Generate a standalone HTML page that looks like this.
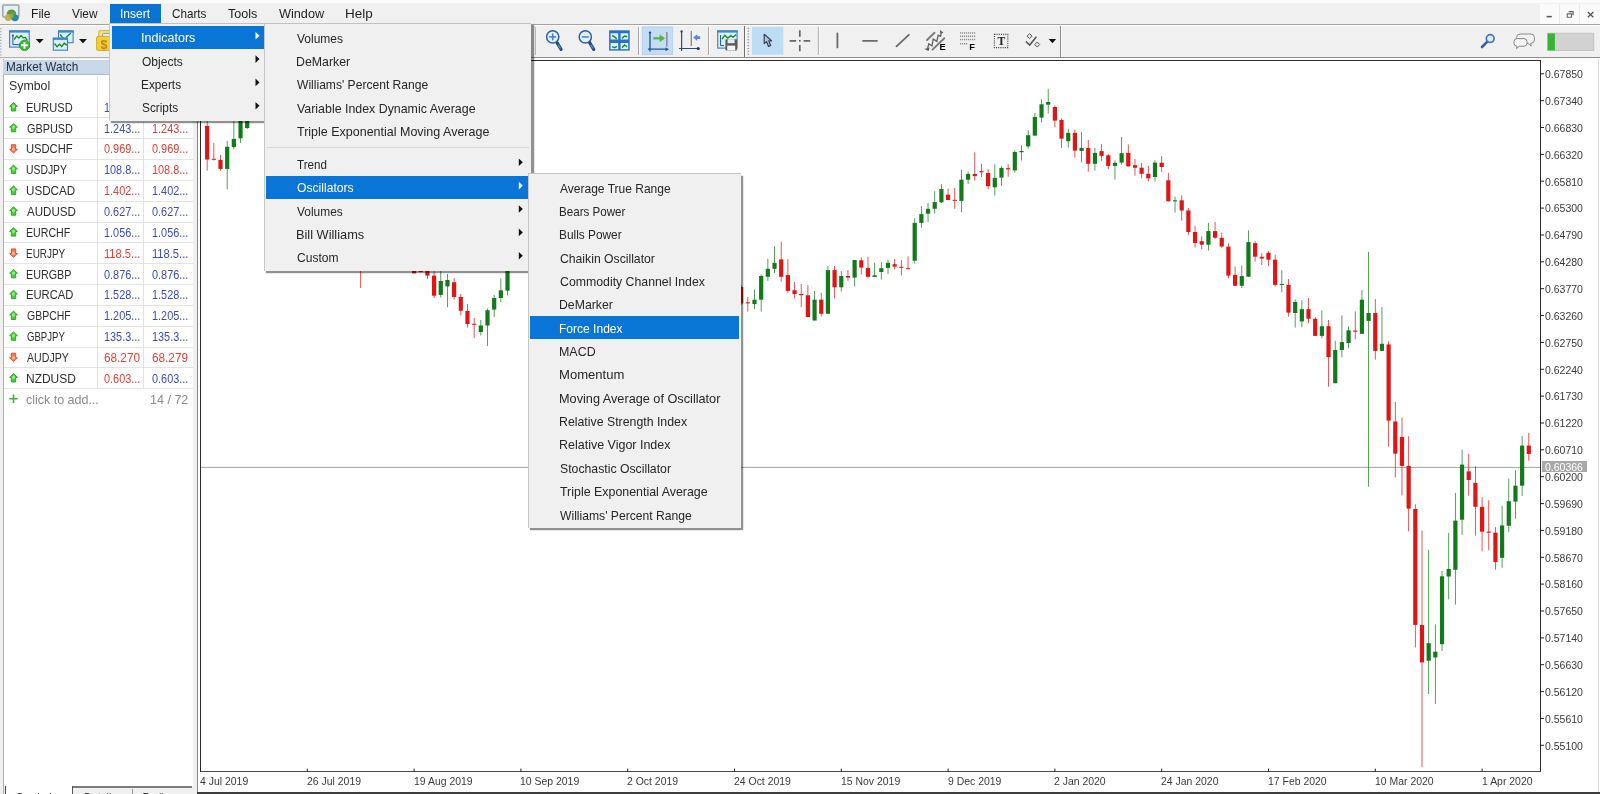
<!DOCTYPE html>
<html lang="en"><head><meta charset="utf-8"><title>MetaTrader - Insert Indicators Oscillators Force Index</title>
<style>
html,body{margin:0;padding:0;}
body{width:1600px;height:794px;overflow:hidden;background:#fff;position:relative;font-family:"Liberation Sans", sans-serif;}
.t{position:absolute;white-space:nowrap;transform-origin:0 50%;}
.b{position:absolute;}
svg{position:absolute;left:0;top:0;overflow:visible;}
svg text{font-family:"Liberation Sans", sans-serif;}
</style></head><body><div id="root" style="position:absolute;left:0;top:0;width:1600px;height:794px;overflow:hidden;will-change:transform;">
<div class="b" style="left:0.00px;top:0.00px;width:1600.00px;height:3.00px;background:#fbfbfb;"></div>
<div class="b" style="left:0.00px;top:3.00px;width:1600.00px;height:21.50px;background:#f0f0f0;"></div>
<div class="b" style="left:0.00px;top:24.00px;width:1600.00px;height:1.00px;background:#a3a3a3;"></div>
<div class="b" style="left:0.00px;top:25.00px;width:1600.00px;height:1.00px;background:#fdfdfd;"></div>
<div class="b" style="left:0.00px;top:26.00px;width:1600.00px;height:31.00px;background:#f0f0f0;"></div>
<div class="b" style="left:0.00px;top:57.00px;width:1600.00px;height:1.00px;background:#8e8e8e;"></div>
<div class="b" style="left:0.00px;top:57.00px;width:197.00px;height:1.00px;background:#b0b0b0;"></div>
<div class="b" style="left:0.00px;top:58.00px;width:1600.00px;height:2.00px;background:#fafafa;"></div>
<div class="b" style="left:0.00px;top:58.00px;width:200.00px;height:736.00px;background:#f0f0f0;"></div>
<div class="b" style="left:109.80px;top:3.60px;width:51.20px;height:19.60px;background:#0a74d4;"></div>
<span id="t1" class="t" style="left:30.55px;top:4.96px;font-size:12.80px;line-height:17px;color:#1d1d1d;transform:scaleX(0.9486);">File</span>
<span id="t2" class="t" style="left:72.10px;top:4.96px;font-size:12.80px;line-height:17px;color:#1d1d1d;transform:scaleX(0.9270);">View</span>
<span id="t3" class="t" style="left:119.76px;top:4.96px;font-size:12.80px;line-height:17px;color:#fff;transform:scaleX(0.9380);">Insert</span>
<span id="t4" class="t" style="left:172.10px;top:4.96px;font-size:12.80px;line-height:17px;color:#1d1d1d;transform:scaleX(0.9117);">Charts</span>
<span id="t5" class="t" style="left:227.90px;top:4.96px;font-size:12.80px;line-height:17px;color:#1d1d1d;transform:scaleX(0.9805);">Tools</span>
<span id="t6" class="t" style="left:278.90px;top:4.96px;font-size:12.80px;line-height:17px;color:#1d1d1d;transform:scaleX(0.9920);">Window</span>
<span id="t7" class="t" style="left:345.25px;top:4.96px;font-size:12.80px;line-height:17px;color:#1d1d1d;transform:scaleX(1.0515);">Help</span>
<div class="b" style="left:1540.00px;top:4.20px;width:60.00px;height:19.80px;background:#fafafa;"></div>
<div class="b" style="left:1558.60px;top:4.20px;width:1.00px;height:19.80px;background:#e9e9e9;"></div>
<div class="b" style="left:1579.00px;top:4.20px;width:1.00px;height:19.80px;background:#e9e9e9;"></div>
<div class="b" style="left:2.50px;top:58.60px;width:190.00px;height:736.00px;background:#fff;border-left:1px solid #b0b0b0;box-sizing:border-box;"></div>
<div class="b" style="left:3.30px;top:59.80px;width:190.20px;height:14.20px;background:#c9d8e9;"></div>
<div class="b" style="left:3.30px;top:73.60px;width:190.20px;height:1.00px;background:#aebccb;"></div>
<span id="t8" class="t" style="left:5.53px;top:58.57px;font-size:12.20px;line-height:16px;color:#1c2b3b;transform:scaleX(0.9665);">Market Watch</span>
<span id="t9" class="t" style="left:8.60px;top:78.27px;font-size:12.20px;line-height:16px;color:#2e2e2e;transform:scaleX(1.0142);">Symbol</span>
<div class="b" style="left:96.90px;top:76.00px;width:1.00px;height:311.50px;background:#e2e2e2;"></div>
<div class="b" style="left:143.20px;top:76.00px;width:1.00px;height:311.50px;background:#e2e2e2;"></div>
<span id="t10" class="t" style="left:25.75px;top:98.75px;font-size:13.00px;line-height:17px;color:#2e2e2e;transform:scaleX(0.8504);">EURUSD</span>
<span id="t11" class="t" style="left:104.40px;top:98.75px;font-size:13.00px;line-height:17px;color:#3b4cc0;transform:scaleX(0.8373);">1.088...</span>
<span id="t12" class="t" style="left:151.80px;top:98.75px;font-size:13.00px;line-height:17px;color:#3b4cc0;transform:scaleX(0.8373);">1.088...</span>
<div class="b" style="left:4.00px;top:117.30px;width:189.00px;height:1.00px;background:#e3e3e3;"></div>
<span id="t13" class="t" style="left:26.60px;top:119.59px;font-size:13.00px;line-height:17px;color:#2e2e2e;transform:scaleX(0.8347);">GBPUSD</span>
<span id="t14" class="t" style="left:104.40px;top:119.59px;font-size:13.00px;line-height:17px;color:#3b4cc0;transform:scaleX(0.8373);">1.243...</span>
<span id="t15" class="t" style="left:151.80px;top:119.59px;font-size:13.00px;line-height:17px;color:#e0403a;transform:scaleX(0.8373);">1.243...</span>
<div class="b" style="left:4.00px;top:138.15px;width:189.00px;height:1.00px;background:#e3e3e3;"></div>
<span id="t16" class="t" style="left:25.74px;top:140.44px;font-size:13.00px;line-height:17px;color:#2e2e2e;transform:scaleX(0.8605);">USDCHF</span>
<span id="t17" class="t" style="left:104.40px;top:140.44px;font-size:13.00px;line-height:17px;color:#e0403a;transform:scaleX(0.8373);">0.969...</span>
<span id="t18" class="t" style="left:151.80px;top:140.44px;font-size:13.00px;line-height:17px;color:#e0403a;transform:scaleX(0.8373);">0.969...</span>
<div class="b" style="left:4.00px;top:158.99px;width:189.00px;height:1.00px;background:#e3e3e3;"></div>
<span id="t19" class="t" style="left:25.80px;top:161.28px;font-size:13.00px;line-height:17px;color:#2e2e2e;transform:scaleX(0.7981);">USDJPY</span>
<span id="t20" class="t" style="left:104.40px;top:161.28px;font-size:13.00px;line-height:17px;color:#3b4cc0;transform:scaleX(0.8373);">108.8...</span>
<span id="t21" class="t" style="left:151.80px;top:161.28px;font-size:13.00px;line-height:17px;color:#e0403a;transform:scaleX(0.8373);">108.8...</span>
<div class="b" style="left:4.00px;top:179.84px;width:189.00px;height:1.00px;background:#e3e3e3;"></div>
<span id="t22" class="t" style="left:25.70px;top:182.13px;font-size:13.00px;line-height:17px;color:#2e2e2e;transform:scaleX(0.8952);">USDCAD</span>
<span id="t23" class="t" style="left:104.40px;top:182.13px;font-size:13.00px;line-height:17px;color:#e0403a;transform:scaleX(0.8373);">1.402...</span>
<span id="t24" class="t" style="left:151.80px;top:182.13px;font-size:13.00px;line-height:17px;color:#3b4cc0;transform:scaleX(0.8373);">1.402...</span>
<div class="b" style="left:4.00px;top:200.68px;width:189.00px;height:1.00px;background:#e3e3e3;"></div>
<span id="t25" class="t" style="left:26.60px;top:202.98px;font-size:13.00px;line-height:17px;color:#2e2e2e;transform:scaleX(0.8916);">AUDUSD</span>
<span id="t26" class="t" style="left:104.40px;top:202.98px;font-size:13.00px;line-height:17px;color:#3b4cc0;transform:scaleX(0.8373);">0.627...</span>
<span id="t27" class="t" style="left:151.80px;top:202.98px;font-size:13.00px;line-height:17px;color:#3b4cc0;transform:scaleX(0.8373);">0.627...</span>
<div class="b" style="left:4.00px;top:221.53px;width:189.00px;height:1.00px;background:#e3e3e3;"></div>
<span id="t28" class="t" style="left:25.78px;top:223.82px;font-size:13.00px;line-height:17px;color:#2e2e2e;transform:scaleX(0.8173);">EURCHF</span>
<span id="t29" class="t" style="left:104.40px;top:223.82px;font-size:13.00px;line-height:17px;color:#3b4cc0;transform:scaleX(0.8373);">1.056...</span>
<span id="t30" class="t" style="left:151.80px;top:223.82px;font-size:13.00px;line-height:17px;color:#3b4cc0;transform:scaleX(0.8373);">1.056...</span>
<div class="b" style="left:4.00px;top:242.38px;width:189.00px;height:1.00px;background:#e3e3e3;"></div>
<span id="t31" class="t" style="left:25.84px;top:244.67px;font-size:13.00px;line-height:17px;color:#2e2e2e;transform:scaleX(0.7645);">EURJPY</span>
<span id="t32" class="t" style="left:104.40px;top:244.67px;font-size:13.00px;line-height:17px;color:#e0403a;transform:scaleX(0.8567);">118.5...</span>
<span id="t33" class="t" style="left:151.80px;top:244.67px;font-size:13.00px;line-height:17px;color:#3b4cc0;transform:scaleX(0.8567);">118.5...</span>
<div class="b" style="left:4.00px;top:263.22px;width:189.00px;height:1.00px;background:#e3e3e3;"></div>
<span id="t34" class="t" style="left:25.77px;top:265.51px;font-size:13.00px;line-height:17px;color:#2e2e2e;transform:scaleX(0.8285);">EURGBP</span>
<span id="t35" class="t" style="left:104.40px;top:265.51px;font-size:13.00px;line-height:17px;color:#3b4cc0;transform:scaleX(0.8373);">0.876...</span>
<span id="t36" class="t" style="left:151.80px;top:265.51px;font-size:13.00px;line-height:17px;color:#3b4cc0;transform:scaleX(0.8373);">0.876...</span>
<div class="b" style="left:4.00px;top:284.07px;width:189.00px;height:1.00px;background:#e3e3e3;"></div>
<span id="t37" class="t" style="left:25.74px;top:286.36px;font-size:13.00px;line-height:17px;color:#2e2e2e;transform:scaleX(0.8634);">EURCAD</span>
<span id="t38" class="t" style="left:104.40px;top:286.36px;font-size:13.00px;line-height:17px;color:#3b4cc0;transform:scaleX(0.8373);">1.528...</span>
<span id="t39" class="t" style="left:151.80px;top:286.36px;font-size:13.00px;line-height:17px;color:#3b4cc0;transform:scaleX(0.8373);">1.528...</span>
<div class="b" style="left:4.00px;top:304.91px;width:189.00px;height:1.00px;background:#e3e3e3;"></div>
<span id="t40" class="t" style="left:26.60px;top:307.21px;font-size:13.00px;line-height:17px;color:#2e2e2e;transform:scaleX(0.8077);">GBPCHF</span>
<span id="t41" class="t" style="left:104.40px;top:307.21px;font-size:13.00px;line-height:17px;color:#3b4cc0;transform:scaleX(0.8373);">1.205...</span>
<span id="t42" class="t" style="left:151.80px;top:307.21px;font-size:13.00px;line-height:17px;color:#3b4cc0;transform:scaleX(0.8373);">1.205...</span>
<div class="b" style="left:4.00px;top:325.76px;width:189.00px;height:1.00px;background:#e3e3e3;"></div>
<span id="t43" class="t" style="left:26.60px;top:328.05px;font-size:13.00px;line-height:17px;color:#2e2e2e;transform:scaleX(0.7361);">GBPJPY</span>
<span id="t44" class="t" style="left:104.40px;top:328.05px;font-size:13.00px;line-height:17px;color:#3b4cc0;transform:scaleX(0.8373);">135.3...</span>
<span id="t45" class="t" style="left:151.80px;top:328.05px;font-size:13.00px;line-height:17px;color:#3b4cc0;transform:scaleX(0.8373);">135.3...</span>
<div class="b" style="left:4.00px;top:346.61px;width:189.00px;height:1.00px;background:#e3e3e3;"></div>
<span id="t46" class="t" style="left:26.60px;top:348.90px;font-size:13.00px;line-height:17px;color:#2e2e2e;transform:scaleX(0.8156);">AUDJPY</span>
<span id="t47" class="t" style="left:104.40px;top:348.90px;font-size:13.00px;line-height:17px;color:#e0403a;transform:scaleX(0.9056);">68.270</span>
<span id="t48" class="t" style="left:151.80px;top:348.90px;font-size:13.00px;line-height:17px;color:#e0403a;transform:scaleX(0.9056);">68.279</span>
<div class="b" style="left:4.00px;top:367.45px;width:189.00px;height:1.00px;background:#e3e3e3;"></div>
<span id="t49" class="t" style="left:25.68px;top:369.74px;font-size:13.00px;line-height:17px;color:#2e2e2e;transform:scaleX(0.9209);">NZDUSD</span>
<span id="t50" class="t" style="left:104.40px;top:369.74px;font-size:13.00px;line-height:17px;color:#e0403a;transform:scaleX(0.8373);">0.603...</span>
<span id="t51" class="t" style="left:151.80px;top:369.74px;font-size:13.00px;line-height:17px;color:#3b4cc0;transform:scaleX(0.8373);">0.603...</span>
<div class="b" style="left:4.00px;top:388.30px;width:189.00px;height:1.00px;background:#e3e3e3;"></div>
<span id="t52" class="t" style="left:25.90px;top:390.59px;font-size:13.00px;line-height:17px;color:#8a8a8a;transform:scaleX(0.9594);">click to add...</span>
<span id="t53" class="t" style="left:149.70px;top:390.59px;font-size:13.00px;line-height:17px;color:#8a8a8a;transform:scaleX(0.9639);">14 / 72</span>
<svg width="200" height="794"><polygon points="13.5,102.6 17.4,106.4 15.7,106.4 15.7,111.0 11.3,111.0 11.3,106.4 9.6,106.4" fill="#45cf35" stroke="#27a51b" stroke-width="0.9" stroke-linejoin="round"/><ellipse cx="13.5" cy="106.4" rx="1.5" ry="1.8" fill="#8df07a"/><polygon points="13.5,123.4 17.4,127.2 15.7,127.2 15.7,131.8 11.3,131.8 11.3,127.2 9.6,127.2" fill="#45cf35" stroke="#27a51b" stroke-width="0.9" stroke-linejoin="round"/><ellipse cx="13.5" cy="127.2" rx="1.5" ry="1.8" fill="#8df07a"/><polygon points="13.5,153.1 17.4,149.3 15.7,149.3 15.7,144.7 11.3,144.7 11.3,149.3 9.6,149.3" fill="#f77a4c" stroke="#de4a22" stroke-width="0.9" stroke-linejoin="round"/><ellipse cx="13.5" cy="149.3" rx="1.5" ry="1.8" fill="#ffb08a"/><polygon points="13.5,165.1 17.4,168.9 15.7,168.9 15.7,173.5 11.3,173.5 11.3,168.9 9.6,168.9" fill="#45cf35" stroke="#27a51b" stroke-width="0.9" stroke-linejoin="round"/><ellipse cx="13.5" cy="168.9" rx="1.5" ry="1.8" fill="#8df07a"/><polygon points="13.5,186.0 17.4,189.8 15.7,189.8 15.7,194.4 11.3,194.4 11.3,189.8 9.6,189.8" fill="#45cf35" stroke="#27a51b" stroke-width="0.9" stroke-linejoin="round"/><ellipse cx="13.5" cy="189.8" rx="1.5" ry="1.8" fill="#8df07a"/><polygon points="13.5,206.8 17.4,210.6 15.7,210.6 15.7,215.2 11.3,215.2 11.3,210.6 9.6,210.6" fill="#45cf35" stroke="#27a51b" stroke-width="0.9" stroke-linejoin="round"/><ellipse cx="13.5" cy="210.6" rx="1.5" ry="1.8" fill="#8df07a"/><polygon points="13.5,227.7 17.4,231.5 15.7,231.5 15.7,236.1 11.3,236.1 11.3,231.5 9.6,231.5" fill="#45cf35" stroke="#27a51b" stroke-width="0.9" stroke-linejoin="round"/><ellipse cx="13.5" cy="231.5" rx="1.5" ry="1.8" fill="#8df07a"/><polygon points="13.5,257.3 17.4,253.5 15.7,253.5 15.7,248.9 11.3,248.9 11.3,253.5 9.6,253.5" fill="#f77a4c" stroke="#de4a22" stroke-width="0.9" stroke-linejoin="round"/><ellipse cx="13.5" cy="253.5" rx="1.5" ry="1.8" fill="#ffb08a"/><polygon points="13.5,269.4 17.4,273.2 15.7,273.2 15.7,277.8 11.3,277.8 11.3,273.2 9.6,273.2" fill="#45cf35" stroke="#27a51b" stroke-width="0.9" stroke-linejoin="round"/><ellipse cx="13.5" cy="273.2" rx="1.5" ry="1.8" fill="#8df07a"/><polygon points="13.5,290.2 17.4,294.0 15.7,294.0 15.7,298.6 11.3,298.6 11.3,294.0 9.6,294.0" fill="#45cf35" stroke="#27a51b" stroke-width="0.9" stroke-linejoin="round"/><ellipse cx="13.5" cy="294.0" rx="1.5" ry="1.8" fill="#8df07a"/><polygon points="13.5,311.1 17.4,314.9 15.7,314.9 15.7,319.5 11.3,319.5 11.3,314.9 9.6,314.9" fill="#45cf35" stroke="#27a51b" stroke-width="0.9" stroke-linejoin="round"/><ellipse cx="13.5" cy="314.9" rx="1.5" ry="1.8" fill="#8df07a"/><polygon points="13.5,331.9 17.4,335.7 15.7,335.7 15.7,340.3 11.3,340.3 11.3,335.7 9.6,335.7" fill="#45cf35" stroke="#27a51b" stroke-width="0.9" stroke-linejoin="round"/><ellipse cx="13.5" cy="335.7" rx="1.5" ry="1.8" fill="#8df07a"/><polygon points="13.5,361.6 17.4,357.8 15.7,357.8 15.7,353.2 11.3,353.2 11.3,357.8 9.6,357.8" fill="#f77a4c" stroke="#de4a22" stroke-width="0.9" stroke-linejoin="round"/><ellipse cx="13.5" cy="357.8" rx="1.5" ry="1.8" fill="#ffb08a"/><polygon points="13.5,373.6 17.4,377.4 15.7,377.4 15.7,382.0 11.3,382.0 11.3,377.4 9.6,377.4" fill="#45cf35" stroke="#27a51b" stroke-width="0.9" stroke-linejoin="round"/><ellipse cx="13.5" cy="377.4" rx="1.5" ry="1.8" fill="#8df07a"/><path d="M13.5 394.6v8.4M9.3 398.8h8.4" stroke="#3cb82e" stroke-width="1.6" fill="none"/></svg>
<div class="b" style="left:3.50px;top:786.40px;width:189.50px;height:8.00px;background:#f0f0f0;"></div>
<div class="b" style="left:72.30px;top:786.40px;width:120.20px;height:1.30px;background:#7d7d7d;"></div>
<div class="b" style="left:5.60px;top:786.00px;width:66.80px;height:9.00px;background:#fff;"></div>
<div class="b" style="left:4.70px;top:786.20px;width:1.10px;height:9.00px;background:#4a4a4a;"></div>
<div class="b" style="left:72.30px;top:786.40px;width:1.10px;height:9.00px;background:#555;"></div>
<div class="b" style="left:132.20px;top:789.40px;width:1.00px;height:6.00px;background:#9a9a9a;"></div>
<span id="t54" class="t" style="left:16.40px;top:788.50px;font-size:13.00px;line-height:17px;color:#222;transform:scaleX(0.8203);">Symbols</span>
<span id="t55" class="t" style="left:83.78px;top:788.50px;font-size:13.00px;line-height:17px;color:#444;transform:scaleX(0.8207);">Details</span>
<span id="t56" class="t" style="left:143.00px;top:788.50px;font-size:13.00px;line-height:17px;color:#444;transform:scaleX(0.6918);">Trading</span>
<div class="b" style="left:193.50px;top:58.00px;width:4.00px;height:736.00px;background:#f0f0f0;"></div>
<div class="b" style="left:197.00px;top:59.00px;width:1403.00px;height:735.00px;background:#fff;"></div>
<div class="b" style="left:196.80px;top:59.00px;width:1.40px;height:735.00px;background:#858585;"></div>
<div class="b" style="left:1598.00px;top:59.00px;width:1.00px;height:735.00px;background:#dcdcdc;"></div>
<div class="b" style="left:197.00px;top:792.40px;width:1403.00px;height:1.60px;background:#3c3c3c;"></div>
<span id="t57" class="t" style="left:1544.80px;top:67.14px;font-size:10.70px;line-height:14px;color:#3a3a3a;transform:scaleX(0.9822);">0.67850</span>
<span id="t58" class="t" style="left:1544.80px;top:94.00px;font-size:10.70px;line-height:14px;color:#3a3a3a;transform:scaleX(0.9822);">0.67340</span>
<span id="t59" class="t" style="left:1544.80px;top:120.86px;font-size:10.70px;line-height:14px;color:#3a3a3a;transform:scaleX(0.9822);">0.66830</span>
<span id="t60" class="t" style="left:1544.80px;top:147.72px;font-size:10.70px;line-height:14px;color:#3a3a3a;transform:scaleX(0.9822);">0.66320</span>
<span id="t61" class="t" style="left:1544.80px;top:174.58px;font-size:10.70px;line-height:14px;color:#3a3a3a;transform:scaleX(0.9822);">0.65810</span>
<span id="t62" class="t" style="left:1544.80px;top:201.44px;font-size:10.70px;line-height:14px;color:#3a3a3a;transform:scaleX(0.9822);">0.65300</span>
<span id="t63" class="t" style="left:1544.80px;top:228.30px;font-size:10.70px;line-height:14px;color:#3a3a3a;transform:scaleX(0.9822);">0.64790</span>
<span id="t64" class="t" style="left:1544.80px;top:255.16px;font-size:10.70px;line-height:14px;color:#3a3a3a;transform:scaleX(0.9822);">0.64280</span>
<span id="t65" class="t" style="left:1544.80px;top:282.02px;font-size:10.70px;line-height:14px;color:#3a3a3a;transform:scaleX(0.9822);">0.63770</span>
<span id="t66" class="t" style="left:1544.80px;top:308.88px;font-size:10.70px;line-height:14px;color:#3a3a3a;transform:scaleX(0.9822);">0.63260</span>
<span id="t67" class="t" style="left:1544.80px;top:335.74px;font-size:10.70px;line-height:14px;color:#3a3a3a;transform:scaleX(0.9822);">0.62750</span>
<span id="t68" class="t" style="left:1544.80px;top:362.60px;font-size:10.70px;line-height:14px;color:#3a3a3a;transform:scaleX(0.9822);">0.62240</span>
<span id="t69" class="t" style="left:1544.80px;top:389.46px;font-size:10.70px;line-height:14px;color:#3a3a3a;transform:scaleX(0.9822);">0.61730</span>
<span id="t70" class="t" style="left:1544.80px;top:416.32px;font-size:10.70px;line-height:14px;color:#3a3a3a;transform:scaleX(0.9822);">0.61220</span>
<span id="t71" class="t" style="left:1544.80px;top:443.18px;font-size:10.70px;line-height:14px;color:#3a3a3a;transform:scaleX(0.9822);">0.60710</span>
<span id="t72" class="t" style="left:1544.80px;top:470.04px;font-size:10.70px;line-height:14px;color:#3a3a3a;transform:scaleX(0.9822);">0.60200</span>
<span id="t73" class="t" style="left:1544.80px;top:496.90px;font-size:10.70px;line-height:14px;color:#3a3a3a;transform:scaleX(0.9822);">0.59690</span>
<span id="t74" class="t" style="left:1544.80px;top:523.76px;font-size:10.70px;line-height:14px;color:#3a3a3a;transform:scaleX(0.9822);">0.59180</span>
<span id="t75" class="t" style="left:1544.80px;top:550.62px;font-size:10.70px;line-height:14px;color:#3a3a3a;transform:scaleX(0.9822);">0.58670</span>
<span id="t76" class="t" style="left:1544.80px;top:577.48px;font-size:10.70px;line-height:14px;color:#3a3a3a;transform:scaleX(0.9822);">0.58160</span>
<span id="t77" class="t" style="left:1544.80px;top:604.34px;font-size:10.70px;line-height:14px;color:#3a3a3a;transform:scaleX(0.9822);">0.57650</span>
<span id="t78" class="t" style="left:1544.80px;top:631.20px;font-size:10.70px;line-height:14px;color:#3a3a3a;transform:scaleX(0.9822);">0.57140</span>
<span id="t79" class="t" style="left:1544.80px;top:658.06px;font-size:10.70px;line-height:14px;color:#3a3a3a;transform:scaleX(0.9822);">0.56630</span>
<span id="t80" class="t" style="left:1544.80px;top:684.92px;font-size:10.70px;line-height:14px;color:#3a3a3a;transform:scaleX(0.9822);">0.56120</span>
<span id="t81" class="t" style="left:1544.80px;top:711.78px;font-size:10.70px;line-height:14px;color:#3a3a3a;transform:scaleX(0.9822);">0.55610</span>
<span id="t82" class="t" style="left:1544.80px;top:738.64px;font-size:10.70px;line-height:14px;color:#3a3a3a;transform:scaleX(0.9822);">0.55100</span>
<div class="b" style="left:1542.40px;top:461.40px;width:44.70px;height:11.00px;background:#a9a9a9;"></div>
<span id="t83" class="t" style="left:1545.40px;top:460.19px;font-size:10.70px;line-height:14px;color:#fff;transform:scaleX(0.9822);">0.60366</span>
<span id="t84" class="t" style="left:199.90px;top:774.29px;font-size:10.70px;line-height:14px;color:#3a3a3a;transform:scaleX(0.9770);">4 Jul 2019</span>
<span id="t85" class="t" style="left:306.70px;top:774.29px;font-size:10.70px;line-height:14px;color:#3a3a3a;transform:scaleX(0.9770);">26 Jul 2019</span>
<span id="t86" class="t" style="left:413.50px;top:774.29px;font-size:10.70px;line-height:14px;color:#3a3a3a;transform:scaleX(0.9770);">19 Aug 2019</span>
<span id="t87" class="t" style="left:520.30px;top:774.29px;font-size:10.70px;line-height:14px;color:#3a3a3a;transform:scaleX(0.9770);">10 Sep 2019</span>
<span id="t88" class="t" style="left:627.10px;top:774.29px;font-size:10.70px;line-height:14px;color:#3a3a3a;transform:scaleX(0.9770);">2 Oct 2019</span>
<span id="t89" class="t" style="left:733.90px;top:774.29px;font-size:10.70px;line-height:14px;color:#3a3a3a;transform:scaleX(0.9770);">24 Oct 2019</span>
<span id="t90" class="t" style="left:840.70px;top:774.29px;font-size:10.70px;line-height:14px;color:#3a3a3a;transform:scaleX(0.9770);">15 Nov 2019</span>
<span id="t91" class="t" style="left:947.50px;top:774.29px;font-size:10.70px;line-height:14px;color:#3a3a3a;transform:scaleX(0.9770);">9 Dec 2019</span>
<span id="t92" class="t" style="left:1054.30px;top:774.29px;font-size:10.70px;line-height:14px;color:#3a3a3a;transform:scaleX(0.9770);">2 Jan 2020</span>
<span id="t93" class="t" style="left:1161.10px;top:774.29px;font-size:10.70px;line-height:14px;color:#3a3a3a;transform:scaleX(0.9770);">24 Jan 2020</span>
<span id="t94" class="t" style="left:1267.90px;top:774.29px;font-size:10.70px;line-height:14px;color:#3a3a3a;transform:scaleX(0.9770);">17 Feb 2020</span>
<span id="t95" class="t" style="left:1374.70px;top:774.29px;font-size:10.70px;line-height:14px;color:#3a3a3a;transform:scaleX(0.9770);">10 Mar 2020</span>
<span id="t96" class="t" style="left:1481.50px;top:774.29px;font-size:10.70px;line-height:14px;color:#3a3a3a;transform:scaleX(0.9770);">1 Apr 2020</span>
<svg width="1600" height="794"><path d="M200.5 60V772M200 60.5H1541M1540.5 60V772" stroke="#2a2a2a" stroke-width="1" fill="none"/><path d="M200 771.5H1541" stroke="#4a4a4a" stroke-width="1" fill="none"/><rect x="201" y="466.9" width="1339" height="0.9" fill="#9a9a9a"/><rect x="206.73" y="118.0" width="0.84" height="52.6" fill="#e01414" opacity=".85"/><rect x="205.05" y="125.9" width="4.2" height="33.6" fill="#e01414"/><rect x="213.41" y="142.9" width="0.84" height="17.6" fill="#e01414" opacity=".85"/><rect x="211.73" y="158.8" width="4.2" height="1.0" fill="#e01414"/><rect x="220.08" y="155.0" width="0.84" height="15.5" fill="#e01414" opacity=".85"/><rect x="218.40" y="159.9" width="4.2" height="9.0" fill="#e01414"/><rect x="226.76" y="141.0" width="0.84" height="48.3" fill="#137a1b" opacity=".85"/><rect x="225.08" y="146.8" width="4.2" height="22.1" fill="#137a1b"/><rect x="233.43" y="118.0" width="0.84" height="31.5" fill="#137a1b" opacity=".85"/><rect x="231.75" y="138.9" width="4.2" height="8.1" fill="#137a1b"/><rect x="240.11" y="108.0" width="0.84" height="35.0" fill="#137a1b" opacity=".85"/><rect x="238.43" y="110.0" width="4.2" height="28.3" fill="#137a1b"/><rect x="246.78" y="108.0" width="0.84" height="21.0" fill="#137a1b" opacity=".85"/><rect x="245.10" y="110.0" width="4.2" height="18.0" fill="#137a1b"/><rect x="360.25" y="240.0" width="0.84" height="48.0" fill="#e01414" opacity=".85"/><rect x="358.57" y="250.0" width="4.2" height="1.0" fill="#e01414"/><rect x="413.65" y="262.0" width="0.84" height="11.3" fill="#e01414" opacity=".85"/><rect x="411.97" y="268.0" width="4.2" height="5.3" fill="#e01414"/><rect x="420.33" y="262.0" width="0.84" height="10.5" fill="#e01414" opacity=".85"/><rect x="418.65" y="266.0" width="4.2" height="6.0" fill="#e01414"/><rect x="427.00" y="262.0" width="0.84" height="17.0" fill="#e01414" opacity=".85"/><rect x="425.32" y="266.0" width="4.2" height="9.6" fill="#e01414"/><rect x="433.68" y="266.0" width="0.84" height="32.0" fill="#e01414" opacity=".85"/><rect x="432.00" y="275.6" width="4.2" height="20.1" fill="#e01414"/><rect x="440.35" y="266.0" width="0.84" height="31.5" fill="#137a1b" opacity=".85"/><rect x="438.67" y="281.0" width="4.2" height="13.9" fill="#137a1b"/><rect x="447.03" y="274.0" width="0.84" height="33.3" fill="#137a1b" opacity=".85"/><rect x="445.35" y="280.0" width="4.2" height="6.4" fill="#137a1b"/><rect x="453.70" y="278.0" width="0.84" height="21.5" fill="#e01414" opacity=".85"/><rect x="452.02" y="282.2" width="4.2" height="14.8" fill="#e01414"/><rect x="460.38" y="294.0" width="0.84" height="21.5" fill="#e01414" opacity=".85"/><rect x="458.70" y="297.0" width="4.2" height="13.7" fill="#e01414"/><rect x="467.06" y="304.0" width="0.84" height="23.5" fill="#e01414" opacity=".85"/><rect x="465.38" y="311.0" width="4.2" height="13.0" fill="#e01414"/><rect x="473.73" y="318.0" width="0.84" height="20.0" fill="#e01414" opacity=".85"/><rect x="472.05" y="323.8" width="4.2" height="1.0" fill="#e01414"/><rect x="480.41" y="320.0" width="0.84" height="15.5" fill="#137a1b" opacity=".85"/><rect x="478.73" y="325.5" width="4.2" height="6.5" fill="#137a1b"/><rect x="487.08" y="308.5" width="0.84" height="37.4" fill="#137a1b" opacity=".85"/><rect x="485.40" y="310.2" width="4.2" height="15.3" fill="#137a1b"/><rect x="493.75" y="295.0" width="0.84" height="22.0" fill="#137a1b" opacity=".85"/><rect x="492.07" y="298.0" width="4.2" height="11.6" fill="#137a1b"/><rect x="500.43" y="278.4" width="0.84" height="23.8" fill="#137a1b" opacity=".85"/><rect x="498.75" y="290.3" width="4.2" height="7.7" fill="#137a1b"/><rect x="507.10" y="258.0" width="0.84" height="37.4" fill="#137a1b" opacity=".85"/><rect x="505.42" y="262.0" width="4.2" height="28.6" fill="#137a1b"/><rect x="740.73" y="285.0" width="0.84" height="20.0" fill="#e01414" opacity=".85"/><rect x="739.05" y="287.0" width="4.2" height="16.5" fill="#e01414"/><rect x="747.40" y="297.0" width="0.84" height="14.6" fill="#e01414" opacity=".85"/><rect x="745.72" y="302.3" width="4.2" height="1.1" fill="#e01414"/><rect x="754.08" y="289.6" width="0.84" height="19.4" fill="#137a1b" opacity=".85"/><rect x="752.40" y="299.7" width="4.2" height="4.3" fill="#137a1b"/><rect x="760.75" y="274.5" width="0.84" height="37.1" fill="#137a1b" opacity=".85"/><rect x="759.07" y="276.0" width="4.2" height="23.7" fill="#137a1b"/><rect x="767.43" y="258.7" width="0.84" height="22.1" fill="#137a1b" opacity=".85"/><rect x="765.75" y="268.8" width="4.2" height="8.0" fill="#137a1b"/><rect x="774.11" y="246.2" width="0.84" height="27.0" fill="#137a1b" opacity=".85"/><rect x="772.42" y="262.9" width="4.2" height="5.9" fill="#137a1b"/><rect x="780.78" y="241.7" width="0.84" height="39.7" fill="#e01414" opacity=".85"/><rect x="779.10" y="259.4" width="4.2" height="17.4" fill="#e01414"/><rect x="787.46" y="259.0" width="0.84" height="33.8" fill="#e01414" opacity=".85"/><rect x="785.77" y="275.1" width="4.2" height="15.8" fill="#e01414"/><rect x="794.13" y="282.0" width="0.84" height="16.4" fill="#e01414" opacity=".85"/><rect x="792.45" y="290.2" width="4.2" height="3.8" fill="#e01414"/><rect x="800.80" y="284.0" width="0.84" height="23.2" fill="#e01414" opacity=".85"/><rect x="799.12" y="294.0" width="4.2" height="1.2" fill="#e01414"/><rect x="807.48" y="285.2" width="0.84" height="32.3" fill="#e01414" opacity=".85"/><rect x="805.80" y="295.3" width="4.2" height="21.7" fill="#e01414"/><rect x="814.15" y="290.9" width="0.84" height="29.6" fill="#137a1b" opacity=".85"/><rect x="812.47" y="299.7" width="4.2" height="20.8" fill="#137a1b"/><rect x="820.83" y="292.8" width="0.84" height="23.6" fill="#e01414" opacity=".85"/><rect x="819.15" y="299.7" width="4.2" height="14.1" fill="#e01414"/><rect x="827.50" y="266.0" width="0.84" height="47.8" fill="#137a1b" opacity=".85"/><rect x="825.82" y="270.1" width="4.2" height="43.7" fill="#137a1b"/><rect x="834.18" y="266.0" width="0.84" height="32.4" fill="#e01414" opacity=".85"/><rect x="832.50" y="270.1" width="4.2" height="17.2" fill="#e01414"/><rect x="840.86" y="271.0" width="0.84" height="20.5" fill="#137a1b" opacity=".85"/><rect x="839.17" y="276.0" width="4.2" height="11.3" fill="#137a1b"/><rect x="847.53" y="270.0" width="0.84" height="10.8" fill="#e01414" opacity=".85"/><rect x="845.85" y="276.0" width="4.2" height="1.6" fill="#e01414"/><rect x="854.21" y="260.0" width="0.84" height="26.5" fill="#137a1b" opacity=".85"/><rect x="852.52" y="260.0" width="4.2" height="17.6" fill="#137a1b"/><rect x="860.88" y="257.5" width="0.84" height="17.0" fill="#e01414" opacity=".85"/><rect x="859.20" y="260.3" width="4.2" height="7.3" fill="#e01414"/><rect x="867.55" y="256.9" width="0.84" height="21.4" fill="#e01414" opacity=".85"/><rect x="865.87" y="268.0" width="4.2" height="8.8" fill="#e01414"/><rect x="874.23" y="262.8" width="0.84" height="14.2" fill="#137a1b" opacity=".85"/><rect x="872.55" y="275.3" width="4.2" height="1.7" fill="#137a1b"/><rect x="880.90" y="262.1" width="0.84" height="17.4" fill="#137a1b" opacity=".85"/><rect x="879.22" y="268.2" width="4.2" height="3.8" fill="#137a1b"/><rect x="887.58" y="260.0" width="0.84" height="13.9" fill="#137a1b" opacity=".85"/><rect x="885.90" y="262.9" width="4.2" height="5.0" fill="#137a1b"/><rect x="894.25" y="259.0" width="0.84" height="10.5" fill="#e01414" opacity=".85"/><rect x="892.57" y="264.2" width="4.2" height="2.4" fill="#e01414"/><rect x="900.93" y="260.0" width="0.84" height="15.5" fill="#e01414" opacity=".85"/><rect x="899.25" y="266.8" width="4.2" height="1.0" fill="#e01414"/><rect x="907.61" y="256.3" width="0.84" height="13.0" fill="#e01414" opacity=".85"/><rect x="905.92" y="268.2" width="4.2" height="1.0" fill="#e01414"/><rect x="914.28" y="218.5" width="0.84" height="45.0" fill="#137a1b" opacity=".85"/><rect x="912.60" y="222.9" width="4.2" height="37.8" fill="#137a1b"/><rect x="920.96" y="206.1" width="0.84" height="21.6" fill="#137a1b" opacity=".85"/><rect x="919.27" y="214.1" width="4.2" height="8.8" fill="#137a1b"/><rect x="927.63" y="203.0" width="0.84" height="19.0" fill="#137a1b" opacity=".85"/><rect x="925.95" y="208.8" width="4.2" height="4.9" fill="#137a1b"/><rect x="934.30" y="191.2" width="0.84" height="22.5" fill="#137a1b" opacity=".85"/><rect x="932.62" y="202.1" width="4.2" height="6.7" fill="#137a1b"/><rect x="940.98" y="184.1" width="0.84" height="18.9" fill="#137a1b" opacity=".85"/><rect x="939.30" y="189.0" width="4.2" height="13.3" fill="#137a1b"/><rect x="947.65" y="188.5" width="0.84" height="11.5" fill="#e01414" opacity=".85"/><rect x="945.97" y="194.7" width="4.2" height="5.3" fill="#e01414"/><rect x="954.33" y="188.0" width="0.84" height="20.8" fill="#e01414" opacity=".85"/><rect x="952.65" y="199.8" width="4.2" height="1.0" fill="#e01414"/><rect x="961.00" y="169.6" width="0.84" height="42.7" fill="#137a1b" opacity=".85"/><rect x="959.32" y="179.7" width="4.2" height="21.2" fill="#137a1b"/><rect x="967.68" y="171.4" width="0.84" height="12.7" fill="#137a1b" opacity=".85"/><rect x="966.00" y="173.9" width="4.2" height="5.8" fill="#137a1b"/><rect x="974.36" y="152.3" width="0.84" height="28.3" fill="#e01414" opacity=".85"/><rect x="972.67" y="174.0" width="4.2" height="2.2" fill="#e01414"/><rect x="981.03" y="163.8" width="0.84" height="13.2" fill="#e01414" opacity=".85"/><rect x="979.35" y="171.2" width="4.2" height="1.2" fill="#e01414"/><rect x="987.71" y="169.1" width="0.84" height="20.3" fill="#e01414" opacity=".85"/><rect x="986.02" y="173.0" width="4.2" height="13.2" fill="#e01414"/><rect x="994.38" y="164.3" width="0.84" height="31.3" fill="#137a1b" opacity=".85"/><rect x="992.70" y="177.9" width="4.2" height="9.4" fill="#137a1b"/><rect x="1001.05" y="166.1" width="0.84" height="19.8" fill="#137a1b" opacity=".85"/><rect x="999.37" y="167.9" width="4.2" height="9.7" fill="#137a1b"/><rect x="1007.73" y="164.3" width="0.84" height="12.4" fill="#e01414" opacity=".85"/><rect x="1006.05" y="168.2" width="4.2" height="1.2" fill="#e01414"/><rect x="1014.40" y="150.2" width="0.84" height="22.4" fill="#137a1b" opacity=".85"/><rect x="1012.72" y="152.0" width="4.2" height="18.4" fill="#137a1b"/><rect x="1021.08" y="145.3" width="0.84" height="15.2" fill="#137a1b" opacity=".85"/><rect x="1019.40" y="151.0" width="4.2" height="1.2" fill="#137a1b"/><rect x="1027.75" y="130.3" width="0.84" height="18.1" fill="#137a1b" opacity=".85"/><rect x="1026.08" y="135.2" width="4.2" height="11.2" fill="#137a1b"/><rect x="1034.43" y="113.0" width="0.84" height="22.6" fill="#137a1b" opacity=".85"/><rect x="1032.75" y="117.0" width="4.2" height="18.6" fill="#137a1b"/><rect x="1041.11" y="99.4" width="0.84" height="22.9" fill="#137a1b" opacity=".85"/><rect x="1039.43" y="104.3" width="4.2" height="13.3" fill="#137a1b"/><rect x="1047.78" y="88.8" width="0.84" height="24.7" fill="#137a1b" opacity=".85"/><rect x="1046.10" y="102.0" width="4.2" height="2.7" fill="#137a1b"/><rect x="1054.45" y="105.6" width="0.84" height="21.7" fill="#e01414" opacity=".85"/><rect x="1052.78" y="107.0" width="4.2" height="13.6" fill="#e01414"/><rect x="1061.13" y="118.5" width="0.84" height="29.4" fill="#e01414" opacity=".85"/><rect x="1059.45" y="120.0" width="4.2" height="18.6" fill="#e01414"/><rect x="1067.80" y="128.9" width="0.84" height="18.7" fill="#137a1b" opacity=".85"/><rect x="1066.12" y="132.9" width="4.2" height="8.3" fill="#137a1b"/><rect x="1074.48" y="129.7" width="0.84" height="27.9" fill="#e01414" opacity=".85"/><rect x="1072.80" y="132.9" width="4.2" height="17.7" fill="#e01414"/><rect x="1081.15" y="132.4" width="0.84" height="30.0" fill="#137a1b" opacity=".85"/><rect x="1079.48" y="147.9" width="4.2" height="3.0" fill="#137a1b"/><rect x="1087.83" y="140.0" width="0.84" height="31.7" fill="#e01414" opacity=".85"/><rect x="1086.15" y="147.9" width="4.2" height="15.9" fill="#e01414"/><rect x="1094.50" y="147.9" width="0.84" height="22.6" fill="#137a1b" opacity=".85"/><rect x="1092.83" y="152.9" width="4.2" height="10.9" fill="#137a1b"/><rect x="1101.18" y="143.9" width="0.84" height="16.9" fill="#e01414" opacity=".85"/><rect x="1099.50" y="151.1" width="4.2" height="4.8" fill="#e01414"/><rect x="1107.86" y="154.1" width="0.84" height="15.0" fill="#e01414" opacity=".85"/><rect x="1106.18" y="155.3" width="4.2" height="10.6" fill="#e01414"/><rect x="1114.53" y="160.3" width="0.84" height="19.4" fill="#137a1b" opacity=".85"/><rect x="1112.85" y="162.9" width="4.2" height="3.0" fill="#137a1b"/><rect x="1121.20" y="137.0" width="0.84" height="27.7" fill="#137a1b" opacity=".85"/><rect x="1119.53" y="153.2" width="4.2" height="9.4" fill="#137a1b"/><rect x="1127.88" y="144.4" width="0.84" height="22.0" fill="#e01414" opacity=".85"/><rect x="1126.20" y="152.9" width="4.2" height="13.5" fill="#e01414"/><rect x="1134.55" y="159.0" width="0.84" height="16.6" fill="#e01414" opacity=".85"/><rect x="1132.88" y="165.2" width="4.2" height="2.5" fill="#e01414"/><rect x="1141.23" y="162.9" width="0.84" height="15.5" fill="#e01414" opacity=".85"/><rect x="1139.55" y="167.7" width="4.2" height="6.1" fill="#e01414"/><rect x="1147.90" y="165.9" width="0.84" height="15.5" fill="#e01414" opacity=".85"/><rect x="1146.23" y="173.8" width="4.2" height="4.5" fill="#e01414"/><rect x="1154.58" y="160.3" width="0.84" height="21.1" fill="#137a1b" opacity=".85"/><rect x="1152.90" y="162.6" width="4.2" height="14.4" fill="#137a1b"/><rect x="1161.25" y="156.2" width="0.84" height="15.5" fill="#e01414" opacity=".85"/><rect x="1159.58" y="162.8" width="4.2" height="4.2" fill="#e01414"/><rect x="1167.93" y="173.0" width="0.84" height="28.5" fill="#e01414" opacity=".85"/><rect x="1166.25" y="180.3" width="4.2" height="21.0" fill="#e01414"/><rect x="1174.61" y="196.7" width="0.84" height="15.9" fill="#137a1b" opacity=".85"/><rect x="1172.93" y="200.3" width="4.2" height="1.1" fill="#137a1b"/><rect x="1181.28" y="195.3" width="0.84" height="25.3" fill="#e01414" opacity=".85"/><rect x="1179.60" y="200.3" width="4.2" height="10.2" fill="#e01414"/><rect x="1187.95" y="208.2" width="0.84" height="27.0" fill="#e01414" opacity=".85"/><rect x="1186.28" y="210.5" width="4.2" height="21.5" fill="#e01414"/><rect x="1194.63" y="225.9" width="0.84" height="21.6" fill="#e01414" opacity=".85"/><rect x="1192.95" y="232.0" width="4.2" height="11.0" fill="#e01414"/><rect x="1201.30" y="236.4" width="0.84" height="12.7" fill="#e01414" opacity=".85"/><rect x="1199.62" y="241.2" width="4.2" height="3.5" fill="#e01414"/><rect x="1207.98" y="222.9" width="0.84" height="27.6" fill="#137a1b" opacity=".85"/><rect x="1206.30" y="231.1" width="4.2" height="13.6" fill="#137a1b"/><rect x="1214.65" y="221.8" width="0.84" height="17.3" fill="#e01414" opacity=".85"/><rect x="1212.98" y="231.1" width="4.2" height="6.6" fill="#e01414"/><rect x="1221.33" y="232.6" width="0.84" height="15.3" fill="#e01414" opacity=".85"/><rect x="1219.65" y="237.8" width="4.2" height="8.7" fill="#e01414"/><rect x="1228.00" y="243.5" width="0.84" height="34.7" fill="#e01414" opacity=".85"/><rect x="1226.33" y="246.7" width="4.2" height="28.9" fill="#e01414"/><rect x="1234.68" y="266.4" width="0.84" height="19.6" fill="#e01414" opacity=".85"/><rect x="1233.00" y="274.9" width="4.2" height="10.9" fill="#e01414"/><rect x="1241.36" y="265.5" width="0.84" height="22.5" fill="#137a1b" opacity=".85"/><rect x="1239.68" y="276.1" width="4.2" height="9.7" fill="#137a1b"/><rect x="1248.03" y="230.3" width="0.84" height="46.7" fill="#137a1b" opacity=".85"/><rect x="1246.35" y="242.1" width="4.2" height="34.6" fill="#137a1b"/><rect x="1254.70" y="241.2" width="0.84" height="20.3" fill="#e01414" opacity=".85"/><rect x="1253.03" y="243.1" width="4.2" height="13.6" fill="#e01414"/><rect x="1261.38" y="253.2" width="0.84" height="11.8" fill="#e01414" opacity=".85"/><rect x="1259.70" y="256.8" width="4.2" height="1.7" fill="#e01414"/><rect x="1268.06" y="251.1" width="0.84" height="14.8" fill="#e01414" opacity=".85"/><rect x="1266.38" y="252.8" width="4.2" height="6.9" fill="#e01414"/><rect x="1274.73" y="254.6" width="0.84" height="32.1" fill="#e01414" opacity=".85"/><rect x="1273.05" y="259.7" width="4.2" height="25.2" fill="#e01414"/><rect x="1281.40" y="270.2" width="0.84" height="22.1" fill="#137a1b" opacity=".85"/><rect x="1279.73" y="283.9" width="4.2" height="1.1" fill="#137a1b"/><rect x="1288.08" y="279.0" width="0.84" height="37.5" fill="#e01414" opacity=".85"/><rect x="1286.40" y="284.9" width="4.2" height="27.7" fill="#e01414"/><rect x="1294.75" y="299.4" width="0.84" height="28.2" fill="#137a1b" opacity=".85"/><rect x="1293.08" y="302.0" width="4.2" height="11.0" fill="#137a1b"/><rect x="1301.43" y="300.3" width="0.84" height="27.0" fill="#137a1b" opacity=".85"/><rect x="1299.75" y="309.1" width="4.2" height="12.3" fill="#137a1b"/><rect x="1308.11" y="298.0" width="0.84" height="25.2" fill="#e01414" opacity=".85"/><rect x="1306.43" y="309.1" width="4.2" height="9.7" fill="#e01414"/><rect x="1314.78" y="317.0" width="0.84" height="18.9" fill="#e01414" opacity=".85"/><rect x="1313.10" y="318.8" width="4.2" height="17.1" fill="#e01414"/><rect x="1321.45" y="310.3" width="0.84" height="27.9" fill="#137a1b" opacity=".85"/><rect x="1319.78" y="326.2" width="4.2" height="9.7" fill="#137a1b"/><rect x="1328.13" y="320.0" width="0.84" height="66.7" fill="#e01414" opacity=".85"/><rect x="1326.45" y="326.2" width="4.2" height="30.9" fill="#e01414"/><rect x="1334.81" y="340.8" width="0.84" height="42.4" fill="#137a1b" opacity=".85"/><rect x="1333.13" y="350.0" width="4.2" height="33.2" fill="#137a1b"/><rect x="1341.48" y="315.3" width="0.84" height="42.0" fill="#137a1b" opacity=".85"/><rect x="1339.80" y="342.1" width="4.2" height="7.9" fill="#137a1b"/><rect x="1348.15" y="326.4" width="0.84" height="21.9" fill="#137a1b" opacity=".85"/><rect x="1346.48" y="330.3" width="4.2" height="12.7" fill="#137a1b"/><rect x="1354.83" y="311.4" width="0.84" height="28.0" fill="#e01414" opacity=".85"/><rect x="1353.15" y="330.6" width="4.2" height="1.1" fill="#e01414"/><rect x="1361.50" y="290.2" width="0.84" height="43.6" fill="#137a1b" opacity=".85"/><rect x="1359.83" y="299.7" width="4.2" height="34.1" fill="#137a1b"/><rect x="1368.18" y="251.8" width="0.84" height="234.9" fill="#137a1b" opacity=".85"/><rect x="1366.50" y="313.0" width="4.2" height="7.9" fill="#137a1b"/><rect x="1374.86" y="299.0" width="0.84" height="60.7" fill="#e01414" opacity=".85"/><rect x="1373.18" y="313.0" width="4.2" height="37.9" fill="#e01414"/><rect x="1381.53" y="307.0" width="0.84" height="44.0" fill="#137a1b" opacity=".85"/><rect x="1379.85" y="343.8" width="4.2" height="7.1" fill="#137a1b"/><rect x="1388.20" y="341.2" width="0.84" height="105.5" fill="#e01414" opacity=".85"/><rect x="1386.53" y="344.4" width="4.2" height="76.2" fill="#e01414"/><rect x="1394.88" y="402.0" width="0.84" height="75.5" fill="#e01414" opacity=".85"/><rect x="1393.20" y="421.5" width="4.2" height="32.2" fill="#e01414"/><rect x="1401.56" y="417.6" width="0.84" height="77.9" fill="#e01414" opacity=".85"/><rect x="1399.88" y="437.0" width="4.2" height="28.9" fill="#e01414"/><rect x="1408.23" y="436.4" width="0.84" height="95.0" fill="#e01414" opacity=".85"/><rect x="1406.55" y="465.9" width="4.2" height="42.7" fill="#e01414"/><rect x="1414.90" y="504.2" width="0.84" height="143.2" fill="#e01414" opacity=".85"/><rect x="1413.23" y="509.0" width="4.2" height="115.9" fill="#e01414"/><rect x="1421.58" y="530.5" width="0.84" height="236.7" fill="#e01414" opacity=".85"/><rect x="1419.90" y="625.0" width="4.2" height="37.4" fill="#e01414"/><rect x="1428.25" y="549.9" width="0.84" height="144.1" fill="#137a1b" opacity=".85"/><rect x="1426.58" y="643.2" width="4.2" height="17.5" fill="#137a1b"/><rect x="1434.93" y="624.3" width="0.84" height="79.8" fill="#137a1b" opacity=".85"/><rect x="1433.25" y="651.7" width="4.2" height="5.8" fill="#137a1b"/><rect x="1441.61" y="571.0" width="0.84" height="80.0" fill="#137a1b" opacity=".85"/><rect x="1439.93" y="576.3" width="4.2" height="67.9" fill="#137a1b"/><rect x="1448.28" y="533.0" width="0.84" height="66.3" fill="#137a1b" opacity=".85"/><rect x="1446.60" y="568.9" width="4.2" height="7.6" fill="#137a1b"/><rect x="1454.95" y="493.0" width="0.84" height="111.5" fill="#137a1b" opacity=".85"/><rect x="1453.28" y="520.6" width="4.2" height="49.2" fill="#137a1b"/><rect x="1461.63" y="449.7" width="0.84" height="85.2" fill="#137a1b" opacity=".85"/><rect x="1459.95" y="464.6" width="4.2" height="55.1" fill="#137a1b"/><rect x="1468.31" y="453.8" width="0.84" height="41.9" fill="#e01414" opacity=".85"/><rect x="1466.63" y="471.4" width="4.2" height="8.6" fill="#e01414"/><rect x="1474.98" y="466.2" width="0.84" height="69.4" fill="#e01414" opacity=".85"/><rect x="1473.30" y="482.9" width="4.2" height="23.9" fill="#e01414"/><rect x="1481.65" y="497.1" width="0.84" height="54.3" fill="#e01414" opacity=".85"/><rect x="1479.98" y="506.9" width="4.2" height="24.8" fill="#e01414"/><rect x="1488.33" y="500.2" width="0.84" height="50.1" fill="#e01414" opacity=".85"/><rect x="1486.65" y="531.6" width="4.2" height="1.1" fill="#e01414"/><rect x="1495.00" y="527.2" width="0.84" height="42.4" fill="#e01414" opacity=".85"/><rect x="1493.33" y="532.6" width="4.2" height="29.5" fill="#e01414"/><rect x="1501.68" y="505.8" width="0.84" height="62.0" fill="#137a1b" opacity=".85"/><rect x="1500.00" y="525.4" width="4.2" height="32.4" fill="#137a1b"/><rect x="1508.36" y="478.6" width="0.84" height="53.6" fill="#137a1b" opacity=".85"/><rect x="1506.68" y="501.2" width="4.2" height="24.6" fill="#137a1b"/><rect x="1515.03" y="470.3" width="0.84" height="48.3" fill="#137a1b" opacity=".85"/><rect x="1513.35" y="485.7" width="4.2" height="15.9" fill="#137a1b"/><rect x="1521.70" y="435.9" width="0.84" height="60.0" fill="#137a1b" opacity=".85"/><rect x="1520.03" y="445.6" width="4.2" height="40.1" fill="#137a1b"/><rect x="1528.38" y="432.9" width="0.84" height="27.9" fill="#e01414" opacity=".85"/><rect x="1526.70" y="445.6" width="4.2" height="8.4" fill="#e01414"/><rect x="1540.4" y="73.3" width="3.6" height="1" fill="#222"/><rect x="1540.4" y="100.2" width="3.6" height="1" fill="#222"/><rect x="1540.4" y="127.0" width="3.6" height="1" fill="#222"/><rect x="1540.4" y="153.9" width="3.6" height="1" fill="#222"/><rect x="1540.4" y="180.7" width="3.6" height="1" fill="#222"/><rect x="1540.4" y="207.6" width="3.6" height="1" fill="#222"/><rect x="1540.4" y="234.5" width="3.6" height="1" fill="#222"/><rect x="1540.4" y="261.3" width="3.6" height="1" fill="#222"/><rect x="1540.4" y="288.2" width="3.6" height="1" fill="#222"/><rect x="1540.4" y="315.0" width="3.6" height="1" fill="#222"/><rect x="1540.4" y="341.9" width="3.6" height="1" fill="#222"/><rect x="1540.4" y="368.8" width="3.6" height="1" fill="#222"/><rect x="1540.4" y="395.6" width="3.6" height="1" fill="#222"/><rect x="1540.4" y="422.5" width="3.6" height="1" fill="#222"/><rect x="1540.4" y="449.3" width="3.6" height="1" fill="#222"/><rect x="1540.4" y="476.2" width="3.6" height="1" fill="#222"/><rect x="1540.4" y="503.1" width="3.6" height="1" fill="#222"/><rect x="1540.4" y="529.9" width="3.6" height="1" fill="#222"/><rect x="1540.4" y="556.8" width="3.6" height="1" fill="#222"/><rect x="1540.4" y="583.6" width="3.6" height="1" fill="#222"/><rect x="1540.4" y="610.5" width="3.6" height="1" fill="#222"/><rect x="1540.4" y="637.4" width="3.6" height="1" fill="#222"/><rect x="1540.4" y="664.2" width="3.6" height="1" fill="#222"/><rect x="1540.4" y="691.1" width="3.6" height="1" fill="#222"/><rect x="1540.4" y="717.9" width="3.6" height="1" fill="#222"/><rect x="1540.4" y="744.8" width="3.6" height="1" fill="#222"/><rect x="200.0" y="768.6" width="1" height="3" fill="#222"/><rect x="306.8" y="768.6" width="1" height="3" fill="#222"/><rect x="413.6" y="768.6" width="1" height="3" fill="#222"/><rect x="520.4" y="768.6" width="1" height="3" fill="#222"/><rect x="627.2" y="768.6" width="1" height="3" fill="#222"/><rect x="734.0" y="768.6" width="1" height="3" fill="#222"/><rect x="840.8" y="768.6" width="1" height="3" fill="#222"/><rect x="947.6" y="768.6" width="1" height="3" fill="#222"/><rect x="1054.4" y="768.6" width="1" height="3" fill="#222"/><rect x="1161.2" y="768.6" width="1" height="3" fill="#222"/><rect x="1268.0" y="768.6" width="1" height="3" fill="#222"/><rect x="1374.8" y="768.6" width="1" height="3" fill="#222"/><rect x="1481.6" y="768.6" width="1" height="3" fill="#222"/></svg>
<svg width="1600" height="60"><rect x="2.8" y="5" width="16" height="12" rx="1" fill="#e9eef2" stroke="#9aa5b0" stroke-width="1.5"/><ellipse cx="11.5" cy="14" rx="4.8" ry="4.6" fill="#5f9a3c"/><ellipse cx="8.3" cy="17.6" rx="3.6" ry="3.4" fill="#c6b04c"/><ellipse cx="15" cy="17.8" rx="3.8" ry="3.4" fill="#2f87a8"/><ellipse cx="11.6" cy="15.8" rx="2.2" ry="2.6" fill="#7fae4a"/><rect x="0" y="28.2" width="1.6" height="1.2" fill="#b4b4b4"/><rect x="0" y="31.1" width="1.6" height="1.2" fill="#b4b4b4"/><rect x="0" y="34.0" width="1.6" height="1.2" fill="#b4b4b4"/><rect x="0" y="36.9" width="1.6" height="1.2" fill="#b4b4b4"/><rect x="0" y="39.8" width="1.6" height="1.2" fill="#b4b4b4"/><rect x="0" y="42.7" width="1.6" height="1.2" fill="#b4b4b4"/><rect x="0" y="45.6" width="1.6" height="1.2" fill="#b4b4b4"/><rect x="0" y="48.5" width="1.6" height="1.2" fill="#b4b4b4"/><rect x="0" y="51.4" width="1.6" height="1.2" fill="#b4b4b4"/><rect x="0" y="54.3" width="1.6" height="1.2" fill="#b4b4b4"/><rect x="9.6" y="30.9" width="19.6" height="16.2" fill="#d9f0ff" stroke="#3d7fc6" stroke-width="1.1"/><rect x="9.1" y="30.4" width="20.6" height="2.2" fill="#3d86d0"/><path d="M12.9 35.5V44.6H22" stroke="#24539a" stroke-width="1" fill="none"/><circle cx="12.9" cy="35.6" r="1" fill="#24539a"/><path d="M14.2 39.5l2.6-3.6 2 2.2 2.2-2.6 2.2 2.4 2 -0.5 2 3" stroke="#1f8a23" stroke-width="1.4" fill="none" stroke-linejoin="round"/><circle cx="24.5" cy="45.3" r="5.2" fill="#3fb53a" stroke="#2a962a" stroke-width="0.8"/><path d="M24.5 41.9v6.8M21.1 45.3h6.8" stroke="#fff" stroke-width="1.9"/><polygon points="35.7,39.0 43.7,39.0 39.7,43.2" fill="#111"/><rect x="58.5" y="30.9" width="14.6" height="11.8" fill="#d9f0ff" stroke="#3d7fc6" stroke-width="1.1"/><rect x="58.0" y="30.4" width="15.6" height="2.2" fill="#3d86d0"/><path d="M60 34.5l3 3.5 M66 37.5l5-4.5" stroke="#1f8a23" stroke-width="1.3" fill="none"/><rect x="53.3" y="38.2" width="14.2" height="12.0" fill="#d9f0ff" stroke="#3d7fc6" stroke-width="1.1"/><rect x="52.8" y="37.7" width="15.2" height="2.2" fill="#3d86d0"/><path d="M54.5 43.5l2.6 3.2 2.4-2.6 2.2 2.4 2.6-3.4 2.6 2.2" stroke="#1f8a23" stroke-width="1.4" fill="none" stroke-linejoin="round"/><polygon points="79.0,39.0 86.9,39.0 83.0,43.2" fill="#111"/><rect x="98.8" y="30.6" width="14" height="8" rx="1.2" fill="#f6e17a" stroke="#d8b33a" stroke-width="1"/><rect x="102.6" y="33.4" width="10" height="6" rx="1" fill="#e7edf2" stroke="#8c9aa8" stroke-width="1"/><rect x="96.6" y="36.4" width="16" height="14" rx="1.4" fill="#f3cf3c" stroke="#d9ad1f" stroke-width="1"/><text x="100.6" y="48.6" font-size="12.5" font-weight="700" fill="#b88a10">$</text><rect x="535.3" y="27.0" width="1" height="28.0" fill="#a6a6a6"/><rect x="536.3" y="27.0" width="1" height="28.0" fill="#fbfbfb"/><rect x="638.0" y="27.0" width="1" height="28.0" fill="#a6a6a6"/><rect x="639.0" y="27.0" width="1" height="28.0" fill="#fbfbfb"/><rect x="708.0" y="27.0" width="1" height="28.0" fill="#a6a6a6"/><rect x="709.0" y="27.0" width="1" height="28.0" fill="#fbfbfb"/><rect x="817.9" y="27.0" width="1" height="28.0" fill="#a6a6a6"/><rect x="818.9" y="27.0" width="1" height="28.0" fill="#fbfbfb"/><rect x="744.0" y="26.0" width="1" height="31.0" fill="#6e6e6e"/><rect x="745.0" y="26.0" width="1" height="31.0" fill="#fbfbfb"/><rect x="1060.0" y="26.0" width="1" height="31.0" fill="#8a8a8a"/><rect x="1061.0" y="26.0" width="1" height="31.0" fill="#fbfbfb"/><rect x="747.6" y="27.6" width="1.5" height="1.2" fill="#9c9c9c"/><rect x="747.6" y="30.5" width="1.5" height="1.2" fill="#9c9c9c"/><rect x="747.6" y="33.4" width="1.5" height="1.2" fill="#9c9c9c"/><rect x="747.6" y="36.3" width="1.5" height="1.2" fill="#9c9c9c"/><rect x="747.6" y="39.2" width="1.5" height="1.2" fill="#9c9c9c"/><rect x="747.6" y="42.1" width="1.5" height="1.2" fill="#9c9c9c"/><rect x="747.6" y="45.0" width="1.5" height="1.2" fill="#9c9c9c"/><rect x="747.6" y="47.9" width="1.5" height="1.2" fill="#9c9c9c"/><rect x="747.6" y="50.8" width="1.5" height="1.2" fill="#9c9c9c"/><rect x="747.6" y="53.7" width="1.5" height="1.2" fill="#9c9c9c"/><path d="M556.7 42.1l4.4 7.2" stroke="#27497f" stroke-width="3.2" stroke-linecap="round"/><path d="M558.6 45.3l1.6 2.6" stroke="#4c86d6" stroke-width="1.6" stroke-linecap="round"/><circle cx="552.7" cy="36.9" r="6.1" fill="#e2f1ff" stroke="#2f5f9e" stroke-width="1.5"/><path d="M549.2 36.9h7" stroke="#3f7ed0" stroke-width="1.5"/><path d="M552.7 33.4v7" stroke="#3f7ed0" stroke-width="1.5"/><path d="M589.3 42.1l4.4 7.2" stroke="#27497f" stroke-width="3.2" stroke-linecap="round"/><path d="M591.2 45.3l1.6 2.6" stroke="#4c86d6" stroke-width="1.6" stroke-linecap="round"/><circle cx="585.3" cy="36.9" r="6.1" fill="#e2f1ff" stroke="#2f5f9e" stroke-width="1.5"/><path d="M581.8 36.9h7" stroke="#3f7ed0" stroke-width="1.5"/><rect x="609.1" y="30.3" width="20.6" height="20.3" fill="#2c70c4"/><rect x="610.6" y="33.3" width="7.6" height="6.2" fill="#d9f5ff"/><rect x="620.6" y="33.3" width="7.6" height="6.2" fill="#d9f5ff"/><rect x="610.6" y="43.0" width="7.6" height="6.2" fill="#d9f5ff"/><rect x="620.6" y="43.0" width="7.6" height="6.2" fill="#d9f5ff"/><path d="M612 35.5l2.4 1.2 2.4 2.2 M622 38.4l2.6-2.4 2.6 0.8 M612 46.6l2.6 1 2.4-1.2 M622 47.6l2.6-2.6 2.6 2" stroke="#1f8a23" stroke-width="1.5" fill="none"/><rect x="642.3" y="26.9" width="30.4" height="27.6" fill="#c4ddf5" stroke="#aecdec" stroke-width="0.8"/><path d="M650 32V51.6M647.9 49.2H667" stroke="#24539a" stroke-width="1.3" fill="none"/><circle cx="650" cy="32.6" r="1.2" fill="#24539a"/><polygon points="665.5,47.2 669,49.2 665.5,51.2" fill="#24539a"/><rect x="666.1" y="32" width="1.5" height="14.6" fill="#858aa0"/><path d="M653.2 38.3H661" stroke="#58b53c" stroke-width="2.2"/><polygon points="659.6,34.4 665.2,38.3 659.6,42.2" fill="#58b53c"/><path d="M681.6 31V51M679 48.5H698" stroke="#2b4a82" stroke-width="1.2" fill="none"/><circle cx="681.6" cy="31.4" r="1.2" fill="#2b4a82"/><circle cx="698.2" cy="48.5" r="1.6" fill="#1f3764"/><rect x="690.6" y="31" width="1.4" height="15" fill="#858aa0"/><polygon points="693.2,37.6 697.2,34.2 697.2,36.3 700.2,36.3 700.2,38.9 697.2,38.9 697.2,41" fill="#5a87d6"/><rect x="717.7" y="30.9" width="19.4" height="17.2" fill="#d9f0ff" stroke="#3d7fc6" stroke-width="1.1"/><rect x="717.2" y="30.4" width="20.4" height="2.2" fill="#3d86d0"/><path d="M720.6 35V45.6H724" stroke="#24539a" stroke-width="1" fill="none"/><path d="M722 39.2l2.8-3.8 3 2.6 3 -2.4 2.4 1.6 3-2.8" stroke="#1f8a23" stroke-width="1.4" fill="none"/><rect x="725.4" y="39.2" width="11.6" height="11.2" rx="0.8" fill="#5a5a5a"/><rect x="727.6" y="39.2" width="7" height="4" fill="#e9edf2"/><rect x="727.2" y="45.6" width="8" height="4.8" fill="#f4f4f4"/><rect x="751.9" y="26.9" width="31.4" height="27.8" fill="#bddcf5"/><path d="M764.2 34.3V43.6l2.3-2 2 4.8 2.2-1-2-4.6H771.6Z" fill="#b9c4cf" stroke="#33465c" stroke-width="1.2" stroke-linejoin="round"/><path d="M789.6 40.8h6.6M803.6 40.8h6.6M799.8 30.3v6.4M799.8 45v6.2" stroke="#666" stroke-width="1.7"/><rect x="799" y="40" width="1.6" height="1.6" fill="#555"/><path d="M837.4 33.4V47.4M863 40.8H877M896.5 46.4L908.8 34.8" stroke="#6a6a6a" stroke-width="1.8" stroke-linecap="round"/><path d="M927 40L934.5 32.8M932.5 49.6L944.3 38.2" stroke="#7a7a7a" stroke-width="1.9" stroke-linecap="round"/><path d="M927.6 48.6l1.2-4.800 3.200 2.200 1.200-7 3.600 2.400 1.400-6.200 2.400 1.200 0.800-4.400" stroke="#5e5e5e" stroke-width="1.3" fill="none"/><polygon points="924.2,49 929.6,47.6 928.6,51" fill="#5a5a5a"/><polygon points="939.8,30 943.6,32.400 940.4,33.6" fill="#5a5a5a"/><text x="939.6" y="49.8" font-size="9.3" font-weight="700" fill="#000">E</text><path d="M960 33.0H975.2" stroke="#8e8e8e" stroke-width="1.5" stroke-dasharray="1.2 0.8"/><path d="M960 36.3H975.2" stroke="#8e8e8e" stroke-width="1.5" stroke-dasharray="1.2 0.8"/><path d="M960 39.6H975.2" stroke="#8e8e8e" stroke-width="1.5" stroke-dasharray="1.2 0.8"/><path d="M960 43.7H968.0" stroke="#8e8e8e" stroke-width="1.5" stroke-dasharray="1.2 0.8"/><text x="969.2" y="49.8" font-size="9.3" font-weight="700" fill="#000">F</text><rect x="994.4" y="34.4" width="13.4" height="13.2" fill="none" stroke="#333" stroke-width="1.1" stroke-dasharray="1 1.2"/><text x="997.4" y="45.1" font-size="11.6" font-weight="700" font-family="Liberation Serif, serif" fill="#222" style="font-family:'Liberation Serif',serif">T</text><path d="M1025.9 41.5l3.8 3.6 6.7-8.4" stroke="#555" stroke-width="1.6" fill="none"/><path d="M1029.6 33.6l2.5 2.5-2.5 2.5-2.5-2.5zM1037.2 42l2.5 2.5-2.5 2.5-2.5-2.5z" stroke="#555" stroke-width="1" fill="#e6e6e6"/><polygon points="1048.7,39.0 1056.1,39.0 1052.4,43.2" fill="#111"/><path d="M1482 47l5.6-5.6" stroke="#3c5f9c" stroke-width="2.6" stroke-linecap="round"/><circle cx="1490.2" cy="38.6" r="3.9" fill="#dcebfa" stroke="#4a74b8" stroke-width="1.7"/><path d="M1520 34h11a3.4 3.4 0 0 1 3.4 3.4v2.6a3.4 3.4 0 0 1-3.4 3.4h-0.4l0.6 2.6-3.2-2.6h-8a3.4 3.4 0 0 1-3.4-3.4v-2.6A3.4 3.4 0 0 1 1520 34z" fill="#f2f2f2" stroke="#8a8a8a" stroke-width="1"/><path d="M1517 38.6h7a3 3 0 0 1 3 3v1.6a3 3 0 0 1-3 3h-4.600l-3 2.400 0.600-2.400a3 3 0 0 1-3-3v-1.600a3 3 0 0 1 3-3z" fill="#f6f6f6" stroke="#858585" stroke-width="1"/><rect x="1547.5" y="33.2" width="46.3" height="17.3" fill="#d2d2d2" stroke="#bcbcbc" stroke-width="0.8"/><rect x="1547.7" y="33.4" width="7.2" height="17" fill="#35b535"/><path d="M1546.6 16.6h5.2" stroke="#555" stroke-width="1.5"/><path d="M1568.6 11.7h4.4v3.600" stroke="#666" stroke-width="1.3" fill="none"/><path d="M1567.3 13.9h4.200v3.300h-4.200z" stroke="#6a6a6a" stroke-width="1.1" fill="#fdfdfd"/><path d="M1587.8 12.1l5.600 5.200M1593.400 12.100l-5.600 5.200" stroke="#555" stroke-width="1.3"/></svg>
<div class="b" style="left:111.40px;top:25.20px;width:154.80px;height:98.10px;background:rgba(0,0,0,.43);box-shadow:0 0 1.5px rgba(0,0,0,.35);"></div><div class="b" style="left:109.20px;top:23.00px;width:154.80px;height:98.10px;background:#f0f0f0;box-sizing:border-box;border-left:1px solid #c6c6c6;border-top:1px solid #c2c2c2;"></div>
<div class="b" style="left:110.20px;top:24.00px;width:153.80px;height:2.00px;background:#eaf6fd;"></div>
<div class="b" style="left:111.60px;top:26.00px;width:152.20px;height:22.60px;background:#0975d6;"></div>
<span id="t97" class="t" style="left:141.04px;top:29.30px;font-size:13.00px;line-height:17px;color:#fff;transform:scaleX(0.9649);">Indicators</span>
<span id="t98" class="t" style="left:142.00px;top:52.65px;font-size:13.00px;line-height:17px;color:#262626;transform:scaleX(0.9266);">Objects</span>
<span id="t99" class="t" style="left:141.09px;top:76.00px;font-size:13.00px;line-height:17px;color:#262626;transform:scaleX(0.9088);">Experts</span>
<span id="t100" class="t" style="left:142.00px;top:99.35px;font-size:13.00px;line-height:17px;color:#262626;transform:scaleX(0.9098);">Scripts</span>
<div class="b" style="left:266.40px;top:25.20px;width:267.20px;height:247.50px;background:rgba(0,0,0,.43);box-shadow:0 0 1.5px rgba(0,0,0,.35);"></div><div class="b" style="left:264.20px;top:23.00px;width:267.20px;height:247.50px;background:#f0f0f0;box-sizing:border-box;border-left:1px solid #c6c6c6;border-top:1px solid #c2c2c2;"></div>
<div class="b" style="left:266.00px;top:176.00px;width:263.50px;height:22.80px;background:#0975d6;"></div>
<div class="b" style="left:267.00px;top:146.80px;width:262.00px;height:1.00px;background:#d4d4d4;"></div>
<span id="t101" class="t" style="left:296.50px;top:29.70px;font-size:13.00px;line-height:17px;color:#262626;transform:scaleX(0.9214);">Volumes</span>
<span id="t102" class="t" style="left:295.55px;top:53.05px;font-size:13.00px;line-height:17px;color:#262626;transform:scaleX(0.9482);">DeMarker</span>
<span id="t103" class="t" style="left:296.50px;top:76.40px;font-size:13.00px;line-height:17px;color:#262626;transform:scaleX(0.9293);">Williams' Percent Range</span>
<span id="t104" class="t" style="left:296.50px;top:99.75px;font-size:13.00px;line-height:17px;color:#262626;transform:scaleX(0.9527);">Variable Index Dynamic Average</span>
<span id="t105" class="t" style="left:296.50px;top:123.10px;font-size:13.00px;line-height:17px;color:#262626;transform:scaleX(0.9608);">Triple Exponential Moving Average</span>
<span id="t106" class="t" style="left:296.50px;top:155.90px;font-size:13.00px;line-height:17px;color:#262626;transform:scaleX(0.8933);">Trend</span>
<span id="t107" class="t" style="left:296.50px;top:179.25px;font-size:13.00px;line-height:17px;color:#fff;transform:scaleX(0.9334);">Oscillators</span>
<span id="t108" class="t" style="left:296.50px;top:202.60px;font-size:13.00px;line-height:17px;color:#262626;transform:scaleX(0.9174);">Volumes</span>
<span id="t109" class="t" style="left:295.52px;top:225.95px;font-size:13.00px;line-height:17px;color:#262626;transform:scaleX(0.9836);">Bill Williams</span>
<span id="t110" class="t" style="left:296.50px;top:249.30px;font-size:13.00px;line-height:17px;color:#262626;transform:scaleX(0.9258);">Custom</span>
<svg width="1600" height="794"><polygon points="255.5,31.9 259.5,35.7 255.5,39.5" fill="#fff"/><polygon points="255.5,55.3 259.5,59.1 255.5,62.9" fill="#111"/><polygon points="255.5,78.6 259.5,82.4 255.5,86.2" fill="#111"/><polygon points="255.5,102.0 259.5,105.8 255.5,109.6" fill="#111"/><polygon points="518.8,158.5 522.8,162.3 518.8,166.1" fill="#111"/><polygon points="518.8,181.8 522.8,185.7 518.8,189.5" fill="#fff"/><polygon points="518.8,205.2 522.8,209.0 518.8,212.8" fill="#111"/><polygon points="518.8,228.6 522.8,232.4 518.8,236.2" fill="#111"/><polygon points="518.8,251.9 522.8,255.7 518.8,259.5" fill="#111"/></svg>
<div class="b" style="left:529.90px;top:175.60px;width:213.20px;height:354.30px;background:rgba(0,0,0,.43);box-shadow:0 0 1.5px rgba(0,0,0,.35);"></div><div class="b" style="left:527.70px;top:173.40px;width:213.20px;height:354.30px;background:#f0f0f0;box-sizing:border-box;border-left:1px solid #c6c6c6;border-top:1px solid #c2c2c2;"></div>
<div class="b" style="left:529.60px;top:316.20px;width:209.30px;height:22.80px;background:#0975d6;"></div>
<span id="t111" class="t" style="left:559.90px;top:179.60px;font-size:13.00px;line-height:17px;color:#262626;transform:scaleX(0.9237);">Average True Range</span>
<span id="t112" class="t" style="left:559.01px;top:202.95px;font-size:13.00px;line-height:17px;color:#262626;transform:scaleX(0.8921);">Bears Power</span>
<span id="t113" class="t" style="left:558.99px;top:226.30px;font-size:13.00px;line-height:17px;color:#262626;transform:scaleX(0.9120);">Bulls Power</span>
<span id="t114" class="t" style="left:559.90px;top:249.65px;font-size:13.00px;line-height:17px;color:#262626;transform:scaleX(0.9380);">Chaikin Oscillator</span>
<span id="t115" class="t" style="left:559.90px;top:273.00px;font-size:13.00px;line-height:17px;color:#262626;transform:scaleX(0.9461);">Commodity Channel Index</span>
<span id="t116" class="t" style="left:558.96px;top:296.35px;font-size:13.00px;line-height:17px;color:#262626;transform:scaleX(0.9430);">DeMarker</span>
<span id="t117" class="t" style="left:558.97px;top:319.70px;font-size:13.00px;line-height:17px;color:#fff;transform:scaleX(0.9260);">Force Index</span>
<span id="t118" class="t" style="left:558.94px;top:343.05px;font-size:13.00px;line-height:17px;color:#262626;transform:scaleX(0.9569);">MACD</span>
<span id="t119" class="t" style="left:558.90px;top:366.40px;font-size:13.00px;line-height:17px;color:#262626;transform:scaleX(1.0049);">Momentum</span>
<span id="t120" class="t" style="left:558.92px;top:389.75px;font-size:13.00px;line-height:17px;color:#262626;transform:scaleX(0.9769);">Moving Average of Oscillator</span>
<span id="t121" class="t" style="left:558.95px;top:413.10px;font-size:13.00px;line-height:17px;color:#262626;transform:scaleX(0.9477);">Relative Strength Index</span>
<span id="t122" class="t" style="left:558.94px;top:436.45px;font-size:13.00px;line-height:17px;color:#262626;transform:scaleX(0.9602);">Relative Vigor Index</span>
<span id="t123" class="t" style="left:559.90px;top:459.80px;font-size:13.00px;line-height:17px;color:#262626;transform:scaleX(0.9423);">Stochastic Oscillator</span>
<span id="t124" class="t" style="left:559.90px;top:483.15px;font-size:13.00px;line-height:17px;color:#262626;transform:scaleX(0.9546);">Triple Exponential Average</span>
<span id="t125" class="t" style="left:559.90px;top:506.50px;font-size:13.00px;line-height:17px;color:#262626;transform:scaleX(0.9328);">Williams' Percent Range</span>
</div></body></html>
